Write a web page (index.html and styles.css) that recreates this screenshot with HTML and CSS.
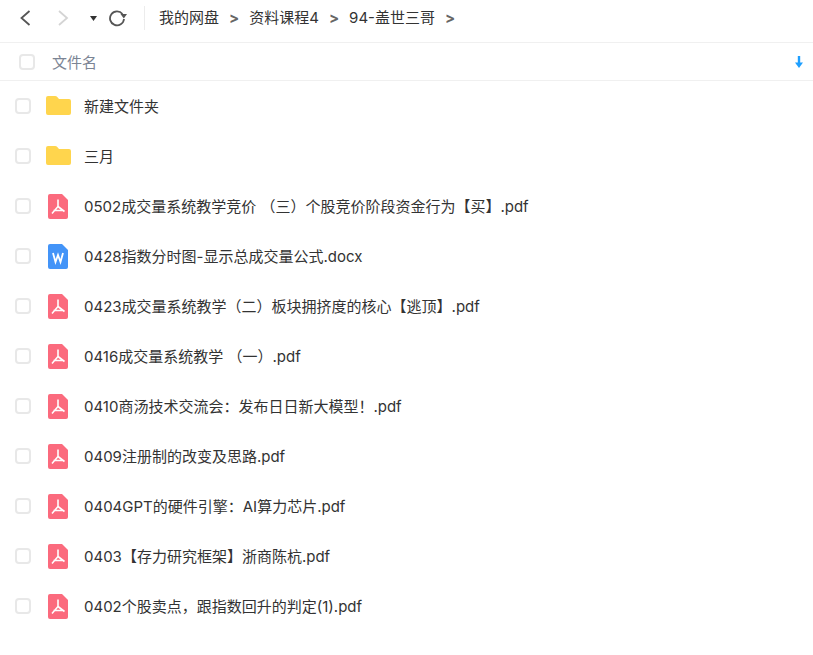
FILE: index.html
```html
<!DOCTYPE html>
<html lang="zh-CN">
<head>
  <meta charset="UTF-8" />
  <title>我的网盘</title>
  <link rel="stylesheet" href="styles.css">
</head>
<body>
  <svg class="defs" width="0" height="0">
    <symbol id="folder" viewBox="0 0 25 19">
      <path d="M0 2 Q0 0 2 0 H9 Q10.500 0 11.500 1.200 L13 3 H23 Q25 3 25 5 V17 Q25 19 23 19 H2 Q0 19 0 17 Z" fill="#ffd54d"/>
    </symbol>
    <symbol id="pdf" viewBox="0 0 20 25">
      <path d="M2 0 H14 L20 6 V23 Q20 25 18 25 H2 Q0 25 0 23 V2 Q0 0 2 0 Z" fill="#fb6a7d"/>
      <path d="M10 5.500 V12.500 L4 19.500 M10 12.500 L16.500 17.500 M5.500 16.500 H15.500" fill="none" stroke="#fff" stroke-width="1.600"/>
    </symbol>
    <symbol id="word" viewBox="0 0 20 25">
      <path d="M2 0 H14 L20 6 V23 Q20 25 18 25 H2 Q0 25 0 23 V2 Q0 0 2 0 Z" fill="#4394f8"/>
      <path d="M5 9 L7.500 18 L10 11 L12.500 18 L15 9" fill="none" stroke="#fff" stroke-width="1.800"/>
    </symbol>
  </svg>

  <div class="toolbar">
    <div class="nav">
      <svg class="nav-back" width="14" height="18" viewBox="0 0 14 18"><path d="M11.500 2 L3.500 9 L11.500 16" fill="none" stroke="#555" stroke-width="1.800"/></svg>
      <svg class="nav-forward" width="14" height="18" viewBox="0 0 14 18"><path d="M3 2 L11 9 L3 16" fill="none" stroke="#d4d4d4" stroke-width="1.800"/></svg>
      <svg class="nav-down" width="7" height="5" viewBox="0 0 7 5"><path d="M0 0 H7 L3.500 5 Z" fill="#333"/></svg>
      <svg class="nav-refresh" width="19" height="18" viewBox="0 0 19 18"><path d="M14.500 5 A7 7 0 1 0 16 10" fill="none" stroke="#555" stroke-width="1.800"/><path d="M12.500 5 H19 L15.800 9.500 Z" fill="#555"/></svg>
    </div>
    <div class="crumbs">
      <span>我的网盘</span><b>&gt;</b>
      <span>资料课程4</span><b>&gt;</b>
      <span>94-盖世三哥</span><b>&gt;</b>
    </div>
  </div>

  <div class="head">
    <span class="check"></span>
    <span class="head-name">文件名</span>
    <svg class="sort" width="8" height="12" viewBox="0 0 8 12"><path d="M4 0 V8" stroke="#1e9fff" stroke-width="2.400"/><path d="M0 6.500 H8 L4 12 Z" fill="#1e9fff"/></svg>
  </div>

  <ul class="files">
    <li><span class="check"></span><span class="slot"><svg class="folder" width="25" height="19"><use href="#folder"/></svg></span><span class="name">新建文件夹</span></li>
    <li><span class="check"></span><span class="slot"><svg class="folder" width="25" height="19"><use href="#folder"/></svg></span><span class="name">三月</span></li>
    <li><span class="check"></span><span class="slot"><svg width="20" height="25"><use href="#pdf"/></svg></span><span class="name">0502成交量系统教学竞价 （三）个股竞价阶段资金行为【买】.pdf</span></li>
    <li><span class="check"></span><span class="slot"><svg width="20" height="25"><use href="#word"/></svg></span><span class="name">0428指数分时图-显示总成交量公式.docx</span></li>
    <li><span class="check"></span><span class="slot"><svg width="20" height="25"><use href="#pdf"/></svg></span><span class="name">0423成交量系统教学（二）板块拥挤度的核心【逃顶】.pdf</span></li>
    <li><span class="check"></span><span class="slot"><svg width="20" height="25"><use href="#pdf"/></svg></span><span class="name">0416成交量系统教学 （一）.pdf</span></li>
    <li><span class="check"></span><span class="slot"><svg width="20" height="25"><use href="#pdf"/></svg></span><span class="name">0410商汤技术交流会：发布日日新大模型！.pdf</span></li>
    <li><span class="check"></span><span class="slot"><svg width="20" height="25"><use href="#pdf"/></svg></span><span class="name">0409注册制的改变及思路.pdf</span></li>
    <li><span class="check"></span><span class="slot"><svg width="20" height="25"><use href="#pdf"/></svg></span><span class="name">0404GPT的硬件引擎：AI算力芯片.pdf</span></li>
    <li><span class="check"></span><span class="slot"><svg width="20" height="25"><use href="#pdf"/></svg></span><span class="name">0403【存力研究框架】浙商陈杭.pdf</span></li>
    <li><span class="check"></span><span class="slot"><svg width="20" height="25"><use href="#pdf"/></svg></span><span class="name">0402个股卖点，跟指数回升的判定(1).pdf</span></li>
  </ul>
</body>
</html>
```

FILE: styles.css
```css
body {
  margin: 0;
  font-family: Inter, "Noto Sans CJK SC", sans-serif;
  font-size: 15px;
  color: #333;
  background-color: white;
  overflow: hidden;
}
.defs {
  position: absolute;
}
.toolbar {
  height: 36px;
  padding-bottom: 6px;
  display: flex;
  align-items: center;
  border-bottom: 1px solid #f0f0f0;
}
.nav {
  width: 144px;
  height: 24px;
  display: flex;
  align-items: center;
  border-right: 1px solid #ececec;
}
.nav-back {
  margin-left: 18px;
}
.nav-forward {
  margin-left: 24px;
}
.nav-down {
  margin-left: 20px;
}
.nav-refresh {
  margin-left: 11px;
}
.crumbs {
  margin-left: 14px;
  display: flex;
  align-items: center;
  line-height: 20px;
}
.crumbs b {
  margin: 0 10px;
  color: #666;
}
.head {
  height: 37px;
  display: flex;
  align-items: center;
  border-bottom: 1px solid #f0f0f0;
  padding-left: 19px;
  padding-right: 10px;
}
.head-name {
  margin-left: 17px;
  padding-top: 2px;
  color: #7b8494;
  line-height: 20px;
}
.sort {
  margin-left: auto;
}
.check {
  width: 12px;
  height: 12px;
  border: 2px solid #e8e8e8;
  border-radius: 4px;
  flex-shrink: 0;
}
.files {
  list-style: none;
  margin: 0;
  padding: 0;
}
.files li {
  height: 50px;
  display: flex;
  align-items: center;
  padding-left: 15px;
}
.slot {
  width: 52px;
  margin-left: 1px;
  display: flex;
  justify-content: center;
}
.slot svg {
  display: block;
}
.slot .folder {
  margin-bottom: 2px;
}
.name {
  padding-top: 2px;
  line-height: 20px;
}
```
